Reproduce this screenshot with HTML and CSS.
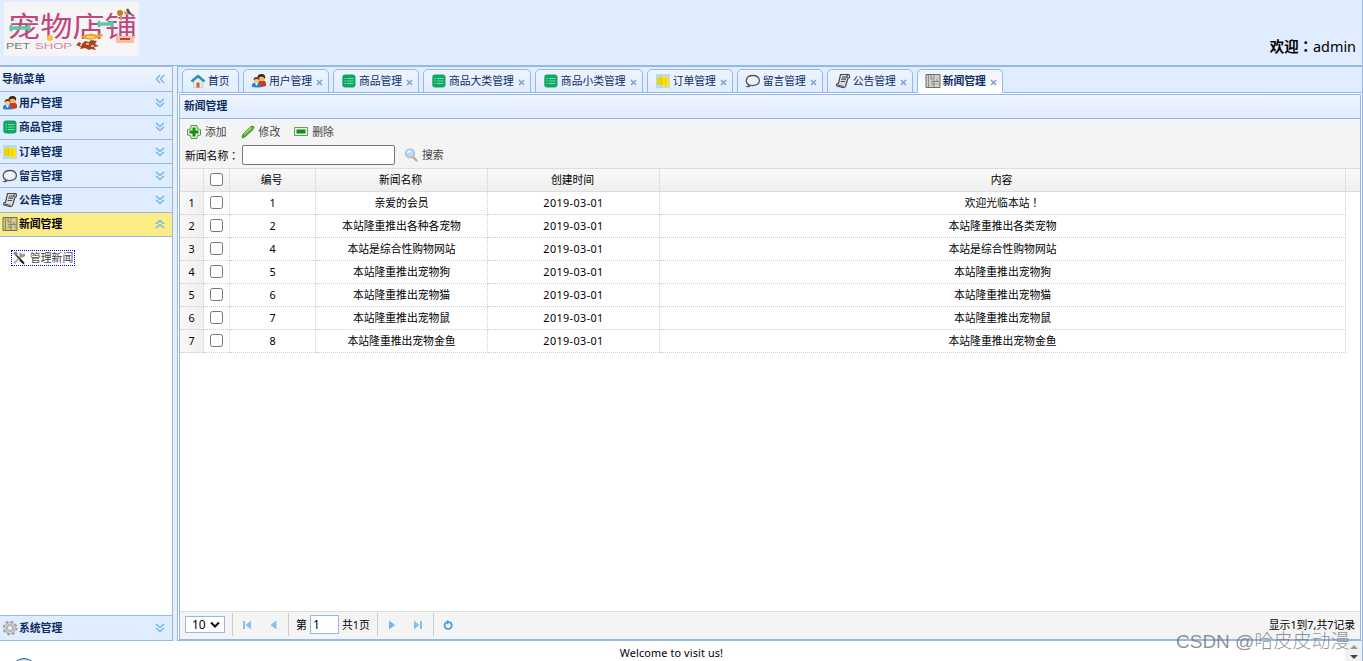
FILE: index.html
```
<!DOCTYPE html>
<html lang="zh-CN">
<head>
    <meta charset="UTF-8">
    <title>宠物店铺后台管理</title>
    <link rel="stylesheet" href="styles.css">
</head>
<body>

<!-- 图标 -->
<svg class="sprite" aria-hidden="true">
    <symbol id="i-user" viewBox="0 0 16 16">
        <path d="M7 14V10q0-3 3.500-3t4.500 3v3q-4 1.500-8 1z" fill="#d8331c"/>
        <circle cx="10.500" cy="5" r="3.200" fill="#f5b766"/>
        <path d="M6.500 6Q6 1 10.500 1q4.500 0 3.500 5-1-2.500-3.500-2.500T6.500 6z" fill="#3b2515"/>
        <path d="M1 14v-2q0-2.500 4.500-2.500T10 12v2q-4.500 1-9 0z" fill="#2e80c9"/>
        <path d="M4 10l1.500 3L7 10z" fill="#fff"/>
        <circle cx="5.500" cy="7.500" r="2.600" fill="#fac77c"/>
        <path d="M2.500 7.500Q2.500 4 5.500 4t3 3Q7 6 5 6 3 6.500 2.500 7.500z" fill="#6b3a1a"/>
    </symbol>
    <symbol id="i-goods" viewBox="0 0 16 16">
        <rect x="1.300" y="1.500" width="13.200" height="13" rx="3" fill="#0ba763"/>
        <path d="M3.500 5.500h1.500M6 5.500h6.500M3.500 8h1.500M6 8h6.500M3.500 10.500h1.500M6 10.500h6.500" stroke="#7fd6aa" stroke-width="1"/>
    </symbol>
    <symbol id="i-order" viewBox="0 0 16 16">
        <rect x="1" y="1" width="14" height="14" fill="#b9dbf2"/>
        <path d="M2 6l3.500-3.500L8 4v8L2 11.500z" fill="#f2d500"/>
        <path d="M7 4.500l2-1 2 1 1-1 2 1.500v8l-4 1-3-1.500z" fill="#ffe219"/>
        <path d="M7 5v7M10.500 5v7" stroke="#d9b800" stroke-width=".7"/>
    </symbol>
    <symbol id="i-msg" viewBox="0 0 16 16">
        <path d="M4 11.800C-.5 9.500.5 2.500 8 2.500s8.500 8 2 9.700q-3 .8-4.500 0Q4.500 14 2.500 13.500 4 13 4 11.800z" fill="#eef4ff" stroke="#555" stroke-width="1.300"/>
    </symbol>
    <symbol id="i-notice" viewBox="0 0 16 16">
        <path d="M5.500 1.500h8.500q1.200 1.500 0 3.500h-1l-2.500 8.500q-1 1.500-3 1L2 13q-1.200-1.500.5-2.500h1z" fill="#dadce2" stroke="#4b4b50" stroke-width="1.200"/>
        <path d="M7 4h4.500M6.300 6.200h4.700M5.700 8.500h4.500M2.500 12l6 1.500M12.500 2l-1 3" stroke="#4b4b50" stroke-width="1.200"/>
    </symbol>
    <symbol id="i-news" viewBox="0 0 16 16">
        <path d="M1 1.500h14v13H1z" fill="#8f8b82" fill-opacity=".4" stroke="#716e64"/>
        <path d="M3.500 2v12M6 2v4h3V2M6 8.500h8M6 11h8M9 7v7M12 3v10" stroke="#716e64" stroke-opacity=".75" fill="none" stroke-width=".9"/>
        <path d="M10 3h3v3h-3zM10 9h3v4h-3z" fill="#e5e2d0" fill-opacity=".6"/>
    </symbol>
    <symbol id="i-gear" viewBox="0 0 16 16">
        <circle cx="8" cy="8" r="6" fill="none" stroke="#999" stroke-width="2.600" stroke-dasharray="2.400 2.300"/>
        <circle cx="8" cy="8" r="4" fill="none" stroke="#b3b3b3" stroke-width="4"/>
        <circle cx="8" cy="8" r="4.500" fill="none" stroke="#ddd" stroke-width="1"/>
        <circle cx="8" cy="8" r="1.800" fill="#e8f0fc"/>
    </symbol>
    <symbol id="i-tools" viewBox="0 0 16 16">
        <path d="M3 13.500l8-8.500" stroke="#b9b9b9" stroke-width="2.400"/>
        <path d="M4 4l9 9" stroke="#333" stroke-width="1.500"/>
        <path d="M2 3l3-1.500L7 4 4.500 6z" fill="#888"/>
        <path d="M9 2l2 2.500 3-1L14 6l-3 2-3-3z" fill="#999"/>
        <path d="M9 9l4.500 4-1 1.500L8.500 11z" fill="#222"/>
    </symbol>
    <symbol id="i-home" viewBox="0 0 16 16">
        <path d="M3.500 8L8 4l4.500 4v6.500h-9z" fill="#edeae5" stroke="#c4beb5" stroke-width=".7"/>
        <path d="M6.500 9.500h3v5h-3z" fill="#b86d2b"/>
        <path d="M1.500 8.500L8 3l6.500 5.500" fill="none" stroke="#2d92b8" stroke-width="2.600" stroke-linejoin="round"/>
    </symbol>
    <symbol id="i-add" viewBox="0 0 16 16">
        <path d="M5 1.500h6l.5 3.500 3 .5v5.500l-3 .5-.5 3H5l-.5-3-3-.5V5.500l3-.5z" fill="#e3f5df" stroke="#4c9a4a"/>
        <path d="M6.500 3.500h3v3h3v3h-3v3h-3v-3h-3v-3h3z" fill="#168d14"/>
    </symbol>
    <symbol id="i-edit" viewBox="0 0 16 16">
        <path d="M2 14l1-4 8-7.500q2-1 3 .5-.5 2-1 2.500l-7.500 7z" fill="#4eb02e" stroke="#2f8521" stroke-width=".8"/>
        <path d="M4 10.500l7.500-7" stroke="#a5e284" stroke-width="1.300"/>
        <path d="M2 14l1-3 2 2z" fill="#494"/>
    </symbol>
    <symbol id="i-del" viewBox="0 0 16 16">
        <path d="M1.500 3.500h13v8h-13z" fill="#e3f5df" stroke="#5aa258"/>
        <path d="M3.500 5.500h9v4h-9z" fill="#168d14"/>
    </symbol>
    <symbol id="i-search" viewBox="0 0 16 16">
        <path d="M10 10l3.500 3.500" stroke="#e0a364" stroke-width="2.400" stroke-linecap="round"/>
        <circle cx="7" cy="6.500" r="4.300" fill="#b5dbfa" stroke="#a4b9da" stroke-width="1.300"/>
        <path d="M4.500 6q.5-2 3-2" stroke="#fff" stroke-width="1.300" fill="none"/>
    </symbol>
    <symbol id="i-down" viewBox="0 0 10 10">
        <path d="M1 1l4 3.500L9 1M1 5l4 3.500L9 5" fill="none" stroke="#71b5ef" stroke-width="1.400"/>
    </symbol>
    <symbol id="i-close" viewBox="0 0 7 7">
        <path d="M1 1l5 5M6 1L1 6" stroke="#7f9fd0" stroke-width="1.500"/>
    </symbol>
</svg>

<div class="header">
    <svg class="logo" width="135" height="54" viewBox="0 0 135 54">
        <rect width="135" height="54" fill="#f5f5f6"/>
        <text class="logo-cn" x="4" y="35" textLength="129" lengthAdjust="spacingAndGlyphs">宠物店铺</text>
        <text class="logo-en" x="2" y="47" textLength="24" lengthAdjust="spacingAndGlyphs" fill="#777">PET</text>
        <text class="logo-en" x="31" y="47" textLength="37" lengthAdjust="spacingAndGlyphs" fill="#d583ab">SHOP</text>
        <path d="M8 26h16M95 22h13" stroke="#5cc9a5" stroke-width="3.500"/>
        <path d="M7 24v4M25 24v4M95 20v4M108 20v4" stroke="#5cc9a5" stroke-width="3" stroke-linecap="round"/>
        <circle cx="46" cy="36" r="3" fill="#f6c543"/>
        <path d="M77 35q8-6 16-2l6-1q0 4-6 4-8 4-16-1z" fill="#f2a72d"/>
        <path d="M83 35h7" stroke="#f9e4a8" stroke-width="1.500"/>
        <path d="M72 43l3-3 3 2 3-3 4 1 2-2 6 1-2 3 4 2-5 1 2 3-5-1-2 1-4-2-5 1 1-2z" fill="#a94222"/>
        <path d="M76 43h2M82 42h3M87 44h3" stroke="#f3d5c2" stroke-width="1.500"/>
        <path d="M112 34h18v7h-18z" fill="#f6bda6"/>
        <path d="M116 37h10" stroke="#b74631" stroke-width="2"/>
        <circle cx="116" cy="11" r="3" fill="#c27d35"/>
        <path d="M117 13v5M120 10l4 2" stroke="#d39a4a" stroke-width="2"/>
        <path d="M123 7l3 5" stroke="#4c5a4d" stroke-width="2.500"/>
    </svg>
    <div class="welcome"><b>欢迎<span class="tc" lang="zh-Hant">：</span></b>admin</div>
</div>

<div class="main">
    <div class="west">
        <div class="west-title">导航菜单
            <svg class="arrow" viewBox="0 0 10 10"><path d="M5 1L1.500 5 5 9M9 1L5.500 5 9 9" fill="none" stroke="#71b5ef" stroke-width="1.400"/></svg>
        </div>
        <div class="acc"><svg class="icon"><use href="#i-user"/></svg>用户管理<svg class="arrow"><use href="#i-down"/></svg></div>
        <div class="acc"><svg class="icon"><use href="#i-goods"/></svg>商品管理<svg class="arrow"><use href="#i-down"/></svg></div>
        <div class="acc"><svg class="icon"><use href="#i-order"/></svg>订单管理<svg class="arrow"><use href="#i-down"/></svg></div>
        <div class="acc"><svg class="icon"><use href="#i-msg"/></svg>留言管理<svg class="arrow"><use href="#i-down"/></svg></div>
        <div class="acc"><svg class="icon"><use href="#i-notice"/></svg>公告管理<svg class="arrow"><use href="#i-down"/></svg></div>
        <div class="acc selected"><svg class="icon"><use href="#i-news"/></svg>新闻管理<svg class="arrow up"><use href="#i-down"/></svg></div>
        <div class="acc-body">
            <a class="menu-link"><svg class="icon"><use href="#i-tools"/></svg>管理新闻</a>
        </div>
        <div class="acc last"><svg class="icon"><use href="#i-gear"/></svg>系统管理<svg class="arrow"><use href="#i-down"/></svg></div>
    </div>

    <div class="center">
        <div class="tabs">
            <div class="tab home"><svg class="icon"><use href="#i-home"/></svg>首页</div>
            <div class="tab"><svg class="icon"><use href="#i-user"/></svg>用户管理<svg class="close"><use href="#i-close"/></svg></div>
            <div class="tab"><svg class="icon"><use href="#i-goods"/></svg>商品管理<svg class="close"><use href="#i-close"/></svg></div>
            <div class="tab wide"><svg class="icon"><use href="#i-goods"/></svg>商品大类管理<svg class="close"><use href="#i-close"/></svg></div>
            <div class="tab wide"><svg class="icon"><use href="#i-goods"/></svg>商品小类管理<svg class="close"><use href="#i-close"/></svg></div>
            <div class="tab"><svg class="icon"><use href="#i-order"/></svg>订单管理<svg class="close"><use href="#i-close"/></svg></div>
            <div class="tab"><svg class="icon"><use href="#i-msg"/></svg>留言管理<svg class="close"><use href="#i-close"/></svg></div>
            <div class="tab"><svg class="icon"><use href="#i-notice"/></svg>公告管理<svg class="close"><use href="#i-close"/></svg></div>
            <div class="tab active"><svg class="icon"><use href="#i-news"/></svg>新闻管理<svg class="close"><use href="#i-close"/></svg></div>
        </div>

        <div class="panel">
            <div class="panel-title">新闻管理</div>
            <div class="toolbar">
                <div class="tools">
                    <a class="add"><svg class="icon"><use href="#i-add"/></svg>添加</a>
                    <a class="edit"><svg class="icon"><use href="#i-edit"/></svg>修改</a>
                    <a><svg class="icon"><use href="#i-del"/></svg>删除</a>
                </div>
                <div class="search">
                    <label for="newsName">新闻名称<span class="tc" lang="zh-Hant">：</span></label>
                    <input type="text" id="newsName">
                    <a><svg class="icon"><use href="#i-search"/></svg>搜索</a>
                </div>
            </div>

            <div class="grid">
                <table>
                    <colgroup>
                        <col class="c-no"><col class="c-ck"><col class="c-id"><col class="c-name"><col class="c-time"><col class="c-text"><col>
                    </colgroup>
                    <thead>
                        <tr><th></th><th><input type="checkbox"></th><th>编号</th><th>新闻名称</th><th>创建时间</th><th>内容</th><th></th></tr>
                    </thead>
                    <tbody>
                        <tr><td>1</td><td><input type="checkbox"></td><td>1</td><td>亲爱的会员</td><td>2019-03-01</td><td>欢迎光临本站<span class="tc" lang="zh-Hant">！</span></td></tr>
                        <tr><td>2</td><td><input type="checkbox"></td><td>2</td><td>本站隆重推出各种各宠物</td><td>2019-03-01</td><td>本站隆重推出各类宠物</td></tr>
                        <tr><td>3</td><td><input type="checkbox"></td><td>4</td><td>本站是综合性购物网站</td><td>2019-03-01</td><td>本站是综合性购物网站</td></tr>
                        <tr><td>4</td><td><input type="checkbox"></td><td>5</td><td>本站隆重推出宠物狗</td><td>2019-03-01</td><td>本站隆重推出宠物狗</td></tr>
                        <tr><td>5</td><td><input type="checkbox"></td><td>6</td><td>本站隆重推出宠物猫</td><td>2019-03-01</td><td>本站隆重推出宠物猫</td></tr>
                        <tr><td>6</td><td><input type="checkbox"></td><td>7</td><td>本站隆重推出宠物鼠</td><td>2019-03-01</td><td>本站隆重推出宠物鼠</td></tr>
                        <tr><td>7</td><td><input type="checkbox"></td><td>8</td><td>本站隆重推出宠物金鱼</td><td>2019-03-01</td><td>本站隆重推出宠物金鱼</td></tr>
                    </tbody>
                </table>
            </div>

            <div class="pager">
                <div class="page-size">10<svg width="10" height="7" viewBox="0 0 10 7"><path d="M1 1.500l4 4 4-4" fill="none" stroke="#111" stroke-width="2"/></svg></div>
                <span class="sep"></span>
                <svg class="pbtn" viewBox="0 0 10 10"><path d="M1 1h2v8H1zM9 .500v9L3.500 5z" fill="#83c1ee"/></svg>
                <svg class="pbtn" viewBox="0 0 10 10"><path d="M8.500 .500v9L2.500 5z" fill="#83c1ee"/></svg>
                <span class="sep"></span>
                <span class="page-label">第</span>
                <input class="page-num" type="text" value="1">
                <span class="page-total">共1页</span>
                <span class="sep"></span>
                <svg class="pbtn" viewBox="0 0 10 10"><path d="M2 .500v9L8 5z" fill="#6db8ef"/></svg>
                <svg class="pbtn" viewBox="0 0 10 10"><path d="M7 1h2v8H7zM1 .500v9L6.500 5z" fill="#83c1ee"/></svg>
                <span class="sep"></span>
                <svg class="pbtn" viewBox="0 0 10 10"><path d="M3.500 2.200A3.600 3.600 0 1 0 6.800 2.200" fill="none" stroke="#3f96d5" stroke-width="1.700"/><path d="M3.500 0L7.500 2 4 4.500z" fill="#3f96d5"/></svg>
                <span class="page-info">显示1到7,共7记录</span>
            </div>
        </div>
    </div>
</div>

<div class="footer">
    <div class="footer-text">Welcome to visit us!</div>
    <div class="scroll"><i class="s-up"></i><i class="s-down"></i></div>
    <div class="ball"></div>
</div>
<div class="watermark">CSDN @哈皮皮动漫</div>

</body>
</html>
```
FILE: styles.css
```
* {
    box-sizing: border-box;
}
body {
    margin: 0;
    width: 1363px;
    height: 661px;
    overflow: hidden;
    display: flex;
    flex-direction: column;
    position: relative;
    font-family: "Noto Sans", "Noto Sans CJK SC", sans-serif;
    font-size: 10.8px;
    line-height: 16px;
    color: #000;
    background: #fff;
}
.sprite {
    position: absolute;
    width: 0;
    height: 0;
}
.tc {
    font-family: "Noto Sans CJK TC", sans-serif;
}
.icon {
    width: 16px;
    height: 16px;
    flex: none;
}

/* 顶部 */
.header {
    height: 66px;
    flex: none;
    display: flex;
    justify-content: space-between;
    padding: 2px 6px 0 4px;
    background: #e0ecff;
    border-right: 1px solid #95b8e7;
    border-bottom: 1px solid #95b8e7;
}
.logo-cn {
    font-family: "Liberation Sans", "Noto Sans CJK SC", sans-serif;
    font-size: 28px;
    fill: #c2457f;
}
.logo-en {
    font-family: "Liberation Sans", sans-serif;
    font-size: 9px;
}
.welcome {
    padding-top: 34px;
    font-size: 14.4px;
    line-height: 20px;
}

/* 左侧导航 */
.main {
    height: 575px;
    flex: none;
    display: flex;
    gap: 4px;
    background: #e6eef8;
}
.west {
    width: 173px;
    flex: none;
    display: flex;
    flex-direction: column;
    border: solid #95b8e7;
    border-width: 1px 1px 0 0;
    background: #fff;
}
.west-title, .acc {
    display: flex;
    align-items: center;
    flex: none;
    height: 24.2px;
    padding: 0 7px 0 2px;
    font-weight: bold;
    color: #0e2d5f;
    border-bottom: 1px solid #95b8e7;
    background: #e0ecff;
}
.west-title {
    height: 24.6px;
    background: linear-gradient(#eff5ff, #e0ecff);
}
.acc .icon {
    margin-right: 1px;
}
.acc.selected {
    color: #000;
    background: #fbec88;
}
.acc.last {
    height: 26px;
    border-top: 1px solid #95b8e7;
}
.arrow {
    width: 10px;
    height: 10px;
    margin-left: auto;
}
.arrow.up {
    transform: rotate(180deg);
}
.acc-body {
    flex: 1;
    padding: 13px 11px;
}
.menu-link {
    display: inline-flex;
    align-items: center;
    gap: 3px;
    width: 64px;
    height: 16px;
    color: #444;
    outline: 1px dotted #00c;
    outline-offset: -1px;
}

/* 选项卡 */
.center {
    flex: 1;
    display: flex;
    flex-direction: column;
    border: 1px solid #95b8e7;
    background: #fff;
}
.tabs {
    display: flex;
    gap: 3.6px;
    height: 26px;
    flex: none;
    padding: 2px 0 0 4px;
    background: #e0ecff;
    border-bottom: 1px solid #95b8e7;
}
.tab {
    display: flex;
    align-items: center;
    width: 86.4px;
    height: 24px;
    padding-left: 7px;
    color: #0e2d5f;
    border: 1px solid #95b8e7;
    border-radius: 5px 5px 0 0;
    background: linear-gradient(#eff5ff, #e0ecff);
    white-space: nowrap;
}
.tab.home {
    width: 57.4px;
}
.tab.wide {
    width: 108.3px;
}
.tab .icon {
    margin-right: 2px;
}
.tab.active {
    font-weight: bold;
    border-bottom-color: #fff;
    background: linear-gradient(#eff5ff, #fff);
}
.close {
    width: 7px;
    height: 7px;
    flex: none;
    margin: 2px 0 0 4px;
}

/* 数据面板 */
.panel {
    flex: 1;
    display: flex;
    flex-direction: column;
    margin: 1px 1px 0 1px;
    border: 1px solid #95b8e7;
}
.panel-title {
    height: 24px;
    flex: none;
    padding: 3px 4px;
    font-weight: bold;
    color: #0e2d5f;
    border-bottom: 1px solid #95b8e7;
    background: linear-gradient(#eff5ff, #e0ecff);
}
.toolbar {
    height: 50px;
    flex: none;
    padding: 5px 5px 0;
    background: #f4f4f4;
    border-bottom: 1px solid #ddd;
}
.tools, .search {
    display: flex;
    align-items: center;
}
.tools {
    height: 16px;
    padding-left: 1px;
    gap: 13px;
}
.toolbar a {
    display: flex;
    gap: 3px;
    color: #444;
}
.search {
    margin-top: 5px;
    height: 20px;
}
.search label {
    width: 57px;
    white-space: nowrap;
}
.search input {
    width: 153px;
    height: 20px;
    margin-right: 8px;
    border: 1px solid #767676;
    border-radius: 2px;
}
.grid {
    flex: 1;
}
table {
    width: 100%;
    table-layout: fixed;
    border-collapse: separate;
    border-spacing: 0;
}
.c-no { width: 24px; }
.c-ck { width: 26px; }
.c-id { width: 86px; }
.c-name, .c-time { width: 172px; }
.c-text { width: 686px; }
th, td {
    height: 23px;
    padding: 0 0 1px;
    font-weight: normal;
    line-height: 16px;
    text-align: center;
    border-right: 1px dotted #ccc;
    border-bottom: 1px dotted #ccc;
}
th {
    background: linear-gradient(#f9f9f9, #efefef);
    border-bottom: 1px solid #ddd;
}
th:nth-child(n+3) {
    padding-right: 2px;
}
th:last-child {
    border-right: none;
}
td:first-child {
    background: linear-gradient(to right, #f9f9f9, #efefef);
}
td:nth-child(5) {
    letter-spacing: 0.4px;
}
input[type="checkbox"] {
    width: 13px;
    height: 13px;
    margin: 0;
    vertical-align: -2px;
}

/* 分页 */
.pager {
    display: flex;
    align-items: center;
    flex: none;
    height: 28px;
    padding: 0 5px 2px;
    background: #f4f4f4;
    border-top: 1px solid #ddd;
}
.page-size {
    display: flex;
    align-items: center;
    justify-content: space-between;
    width: 40px;
    height: 17px;
    padding: 0 4px 0 6px;
    font-size: 12px;
    border: 1px solid #95b8e7;
    background: #fff;
}
.sep {
    width: 1px;
    height: 23px;
    margin: 0 1px 0 7px;
    background: #ccc;
}
.pbtn {
    width: 10px;
    height: 10px;
    margin: 0 8px;
}
.pbtn + .sep {
    margin-left: 2px;
}
.page-label {
    width: 14px;
    margin-left: 6px;
}
.page-num {
    width: 29px;
    height: 19px;
    padding: 0 2px;
    font: 12px "Noto Sans", sans-serif;
    border: 1px solid #95b8e7;
}
.page-total {
    margin-left: 3px;
}
.page-info {
    margin-left: auto;
}

/* 底部 */
.footer {
    flex: 1;
    display: flex;
    position: relative;
    overflow: hidden;
    border-right: 1px solid #95b8e7;
}
.footer-text {
    width: 1343px;
    padding-top: 4px;
    text-align: center;
    letter-spacing: 0.15px;
}
.scroll {
    display: flex;
    flex-direction: column;
    align-items: center;
    gap: 6px;
    width: 17px;
    margin-left: 2px;
    padding-top: 4px;
    background: #f1f1f1;
}
.s-up, .s-down {
    border: 4px solid transparent;
    border-top: none;
    border-bottom-color: #999;
}
.s-down {
    border-top: 4px solid #444;
    border-bottom: none;
}
.ball {
    position: absolute;
    left: 11px;
    top: 17px;
    width: 26px;
    height: 26px;
    border: 1px solid #24618f;
    border-radius: 50%;
    background: #cfe2ef;
}
.watermark {
    position: absolute;
    left: 1176px;
    top: 630px;
    font-family: "Liberation Sans", "Noto Sans CJK SC", sans-serif;
    font-size: 19px;
    line-height: 24px;
    font-weight: 300;
    white-space: nowrap;
    color: rgba(110, 110, 115, 0.75);
}
```
